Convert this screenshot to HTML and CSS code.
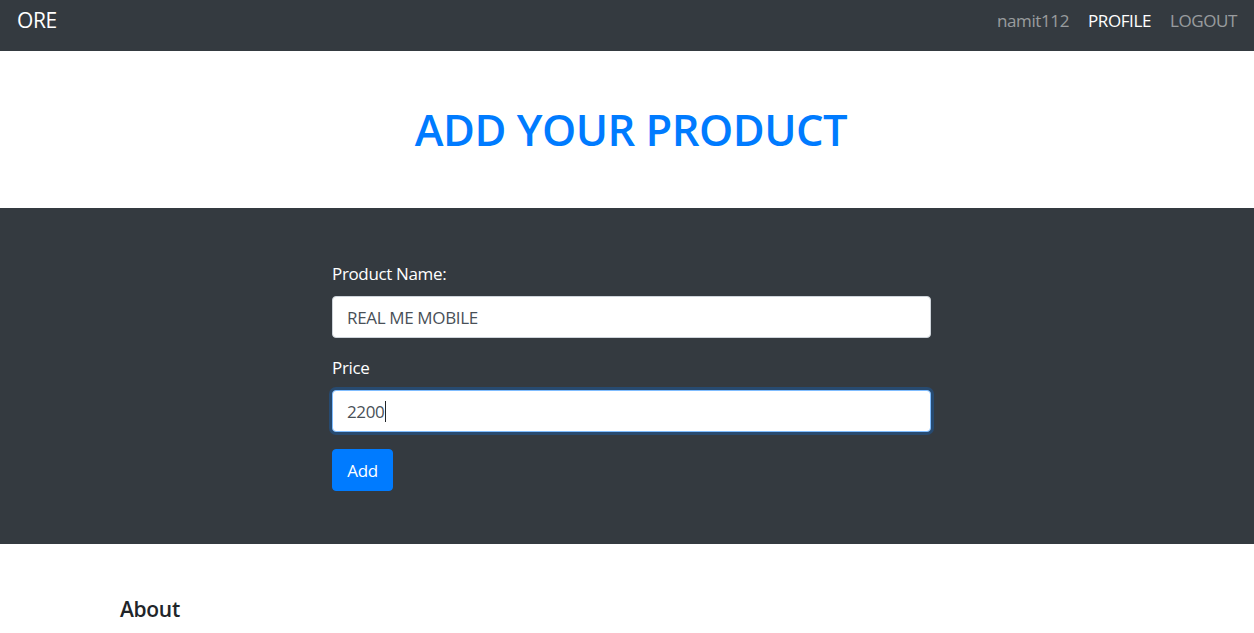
FILE: index.html
```html
<!DOCTYPE html>
<html>
<head>
<meta charset="utf-8">
<title>Add Product</title>
<link rel="stylesheet" href="styles.css">
</head>
<body>
<nav class="navbar">
  <a class="brand" href="#">ORE</a>
  <div class="nav-links">
    <span class="nav-link">namit112</span>
    <a class="nav-link active" href="#">PROFILE</a>
    <a class="nav-link" href="#">LOGOUT</a>
  </div>
</nav>
<header class="page-title">
  <h1>ADD YOUR PRODUCT</h1>
</header>
<section class="form-section">
  <form class="product-form">
    <label class="field-label" for="pname">Product Name:</label>
    <div class="input">REAL ME MOBILE</div>
    <label class="field-label" for="price">Price</label>
    <div class="input focused">2200<span class="caret"></span></div>
    <button type="button" class="btn">Add</button>
  </form>
</section>
<footer class="footer">
  <h5 class="about">About</h5>
</footer>
</body>
</html>
```
FILE: styles.css
```css
* { box-sizing: border-box; }
html, body { margin: 0; padding: 0; }
body {
  font-family: "Open Sans", "Noto Sans", sans-serif;
  background: #fff;
  color: #212529;
}
.navbar {
  height: 51px;
  background: #343a40;
  display: flex;
  align-items: center;
  justify-content: space-between;
  padding: 0 17px 11px 17px;
}
.brand {
  color: #fff;
  text-decoration: none;
  font-size: 21px;
  letter-spacing: -0.4px;
}
.nav-links { display: flex; gap: 19px; }
.nav-link {
  color: rgba(255,255,255,.5);
  text-decoration: none;
  font-size: 17px;
  letter-spacing: -0.4px;
}
.nav-link.active { color: #fff; }
.page-title {
  height: 157px;
  display: flex;
  align-items: center;
  justify-content: center;
  padding-left: 8px;
}
.page-title h1 {
  margin: 0;
  color: #007bff;
  font-size: 43.5px;
  font-weight: 600;
  letter-spacing: -0.5px;
}
.form-section {
  background: #343a40;
  height: 336px;
  padding-top: 54px;
}
.product-form {
  width: 599px;
  margin-left: calc(50% - 295px);
  display: flex;
  flex-direction: column;
  align-items: flex-start;
}
.field-label {
  color: #fff;
  font-size: 17px;
  letter-spacing: -0.35px;
  line-height: 24px;
  margin-bottom: 10px;
}
.input {
  width: 100%;
  height: 42px;
  background: #fff;
  border: 1px solid #ced4da;
  border-radius: 4px;
  padding: 0 14px;
  display: flex;
  align-items: center;
  font-size: 17px;
  letter-spacing: -0.35px;
  color: #495057;
  margin-bottom: 18px;
}
.input.focused {
  border-color: #80bdff;
  box-shadow: 0 0 0 3px rgba(0,123,255,.25);
  margin-bottom: 17px;
}
.caret {
  display: inline-block;
  width: 1px;
  height: 21px;
  background: #212529;
  margin-left: 1px;
}
.btn {
  height: 42px;
  width: 61px;
  background: #007bff;
  border: 1px solid #007bff;
  border-radius: 4px;
  color: #fff;
  font-family: inherit;
  font-size: 17px;
  letter-spacing: -0.35px;
  padding: 0;
}
.footer {
  padding: 51px 0 0 120px;
}
.about {
  margin: 0;
  font-size: 21px;
  font-weight: 600;
  color: #212529;
  letter-spacing: -0.3px;
}
```
